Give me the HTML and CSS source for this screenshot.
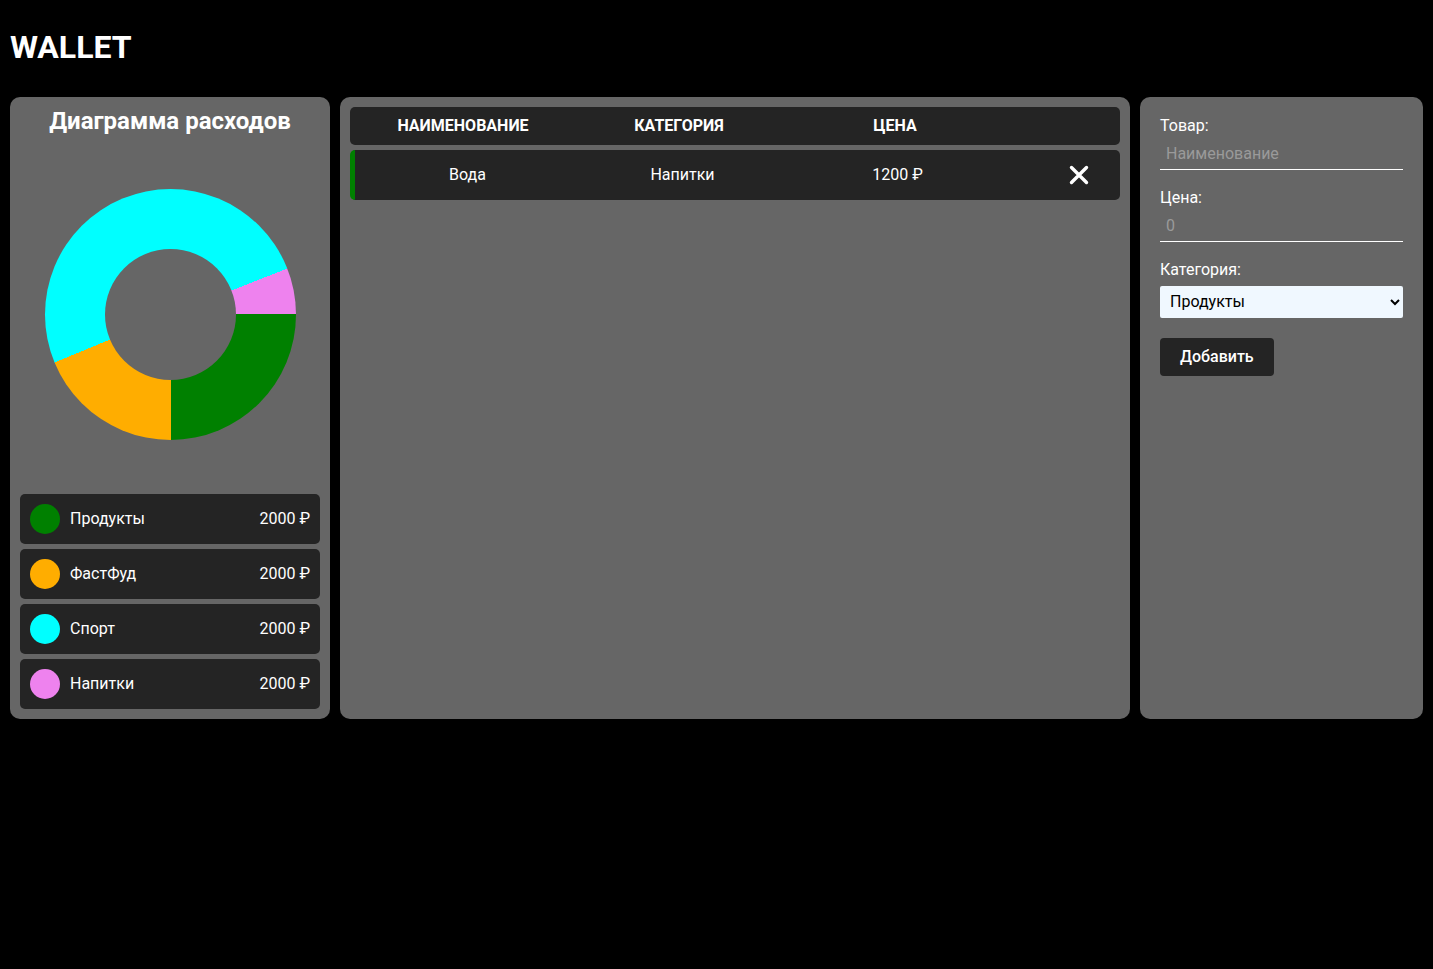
FILE: index.html
```html
<!DOCTYPE html>
<html lang="ru">
<head>
<meta charset="utf-8">
<title>Wallet</title>
<link rel="stylesheet" href="styles.css">
</head>
<body>
<h1 class="logo">WALLET</h1>
<main class="layout">
  <section class="panel chart-panel">
    <h2 class="chart-title">Диаграмма расходов</h2>
    <div class="chart-area">
      <div class="donut"><div class="donut-hole"></div></div>
    </div>
    <ul class="legend">
      <li class="legend-item"><span class="dot dot-green"></span><span class="legend-name">Продукты</span><span class="legend-sum">2000 ₽</span></li>
      <li class="legend-item"><span class="dot dot-orange"></span><span class="legend-name">ФастФуд</span><span class="legend-sum">2000 ₽</span></li>
      <li class="legend-item"><span class="dot dot-cyan"></span><span class="legend-name">Спорт</span><span class="legend-sum">2000 ₽</span></li>
      <li class="legend-item"><span class="dot dot-violet"></span><span class="legend-name">Напитки</span><span class="legend-sum">2000 ₽</span></li>
    </ul>
  </section>

  <section class="panel table-panel">
    <div class="table-head">
      <span class="cell">НАИМЕНОВАНИЕ</span>
      <span class="cell">КАТЕГОРИЯ</span>
      <span class="cell">ЦЕНА</span>
      <span class="cell"></span>
    </div>
    <div class="table-row row-green">
      <span class="cell">Вода</span>
      <span class="cell">Напитки</span>
      <span class="cell">1200 ₽</span>
      <span class="cell cell-action">
        <button class="remove" type="button" aria-label="Удалить">
          <svg width="20" height="20" viewBox="0 0 20 20"><path d="M2.5 2.5 L17.5 17.5 M17.5 2.5 L2.5 17.5" stroke="#fff" stroke-width="3.4" stroke-linecap="round"/></svg>
        </button>
      </span>
    </div>
  </section>

  <section class="panel form-panel">
    <label class="field-label" for="name">Товар:</label>
    <input class="field-input" id="name" type="text" placeholder="Наименование">
    <label class="field-label" for="price">Цена:</label>
    <input class="field-input" id="price" type="number" placeholder="0">
    <label class="field-label" for="cat">Категория:</label>
    <select class="field-select" id="cat">
      <option>Продукты</option>
      <option>ФастФуд</option>
      <option>Спорт</option>
      <option>Напитки</option>
    </select>
    <button class="add-btn" type="button">Добавить</button>
  </section>
</main>
</body>
</html>
```

FILE: styles.css
```css
* { box-sizing: border-box; }

body {
  margin: 0;
  padding: 0 10px;
  background: #000;
  color: #fff;
  font-family: Roboto, "Liberation Sans", sans-serif;
  font-size: 16px;
}

.logo {
  margin: 29px 0 30px;
  font-size: 32px;
  line-height: 37.5px;
  font-weight: 700;
}

.layout {
  display: flex;
  gap: 10px;
  height: 622px;
}

.panel {
  background: #666666;
  border-radius: 10px;
  padding: 10px;
}

/* left */
.chart-panel {
  width: 320px;
  display: flex;
  flex-direction: column;
}

.chart-title {
  margin: 0;
  text-align: center;
  font-size: 24px;
  line-height: 28px;
  font-weight: 700;
}

.chart-area {
  flex: 1;
  display: flex;
  align-items: center;
  justify-content: center;
}

.donut {
  width: 251px;
  height: 251px;
  border-radius: 50%;
  background: conic-gradient(from 90deg,
    #008000 0deg 90deg,
    #ffad00 90deg 157.5deg,
    #00ffff 157.5deg 338.5deg,
    #ee82ee 338.5deg 360deg);
  display: flex;
  align-items: center;
  justify-content: center;
}

.donut-hole {
  width: 131px;
  height: 131px;
  border-radius: 50%;
  background: #666666;
}

.legend {
  list-style: none;
  margin: 0;
  padding: 0;
  display: flex;
  flex-direction: column;
  gap: 5px;
}

.legend-item {
  height: 50px;
  background: #242424;
  border-radius: 5px;
  display: flex;
  align-items: center;
  padding: 0 10px;
}

.dot {
  width: 30px;
  height: 30px;
  border-radius: 50%;
  margin-right: 10px;
  flex: none;
}
.dot-green { background: #008000; }
.dot-orange { background: #ffad00; }
.dot-cyan { background: #00ffff; }
.dot-violet { background: #ee82ee; }

.legend-name { flex: 1; }

/* middle */
.table-panel {
  flex: 1;
  display: flex;
  flex-direction: column;
  gap: 5px;
}

.table-head,
.table-row {
  display: grid;
  align-items: center;
  background: #242424;
  border-radius: 5px;
}

.table-head {
  grid-template-columns: 216px 216px 216px 1fr;
  height: 38px;
  padding: 0 5px;
  font-weight: 700;
}

.table-row {
  grid-template-columns: 215px 215px 215px 1fr;
  height: 50px;
  padding: 0 5px;
}

.row-green {
  border-left: 5px solid #008000;
  padding-left: 5px;
}

.cell { text-align: center; }

.cell-action {
  display: flex;
  justify-content: flex-end;
  padding-right: 26px;
}

.remove {
  background: none;
  border: 0;
  padding: 0;
  width: 20px;
  height: 20px;
  cursor: pointer;
  display: block;
}
.remove svg { display: block; }

/* right */
.form-panel {
  width: 283px;
  padding: 19px 20px 20px;
  display: flex;
  flex-direction: column;
  align-items: flex-start;
}

.field-label {
  display: block;
  line-height: 19px;
}

.field-input {
  width: 100%;
  background: transparent;
  border: 0;
  border-bottom: 1px solid #fff;
  color: #fff;
  font: inherit;
  line-height: 19px;
  padding: 9px 6px 6px;
  margin-bottom: 18px;
  outline: none;
}
.field-input::placeholder { color: #9a9a9a; }
.field-input::-webkit-outer-spin-button,
.field-input::-webkit-inner-spin-button { -webkit-appearance: none; margin: 0; }

.field-select {
  width: 100%;
  height: 32px;
  margin-top: 7px;
  background: #f0f8ff;
  color: #000;
  border: 0;
  border-radius: 2px;
  font: inherit;
  padding: 0 6px;
}

.add-btn {
  margin-top: 20px;
  height: 38px;
  padding: 0 20px;
  background: #242424;
  color: #fff;
  border: 0;
  border-radius: 4px;
  font: inherit;
  font-weight: 500;
}
```
